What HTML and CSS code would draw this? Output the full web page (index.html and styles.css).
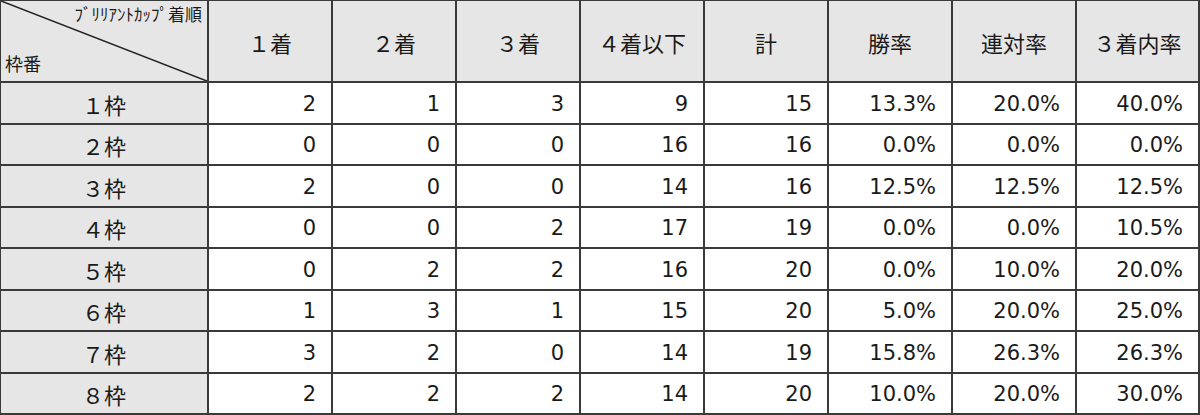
FILE: index.html
```html
<!DOCTYPE html>
<html lang="ja">
<head>
<meta charset="utf-8">
<link rel="stylesheet" href="styles.css">
</head>
<body>
<div class="table">
  <div class="cell head corner">
    <svg class="diag" viewBox="0 0 100 100" preserveAspectRatio="none"><line x1="0" y1="0" x2="100" y2="100" vector-effect="non-scaling-stroke"/></svg>
    <span class="corner-top">ﾌﾞﾘﾘｱﾝﾄｶｯﾌﾟ着順</span>
    <span class="corner-bottom">枠番</span>
  </div>
  <div class="cell head">１着</div>
  <div class="cell head">２着</div>
  <div class="cell head">３着</div>
  <div class="cell head">４着以下</div>
  <div class="cell head">計</div>
  <div class="cell head">勝率</div>
  <div class="cell head">連対率</div>
  <div class="cell head">３着内率</div>

  <div class="cell label">１枠</div><div class="cell num">2</div><div class="cell num">1</div><div class="cell num">3</div><div class="cell num">9</div><div class="cell num">15</div><div class="cell num">13.3%</div><div class="cell num">20.0%</div><div class="cell num">40.0%</div>
  <div class="cell label">２枠</div><div class="cell num">0</div><div class="cell num">0</div><div class="cell num">0</div><div class="cell num">16</div><div class="cell num">16</div><div class="cell num">0.0%</div><div class="cell num">0.0%</div><div class="cell num">0.0%</div>
  <div class="cell label">３枠</div><div class="cell num">2</div><div class="cell num">0</div><div class="cell num">0</div><div class="cell num">14</div><div class="cell num">16</div><div class="cell num">12.5%</div><div class="cell num">12.5%</div><div class="cell num">12.5%</div>
  <div class="cell label">４枠</div><div class="cell num">0</div><div class="cell num">0</div><div class="cell num">2</div><div class="cell num">17</div><div class="cell num">19</div><div class="cell num">0.0%</div><div class="cell num">0.0%</div><div class="cell num">10.5%</div>
  <div class="cell label">５枠</div><div class="cell num">0</div><div class="cell num">2</div><div class="cell num">2</div><div class="cell num">16</div><div class="cell num">20</div><div class="cell num">0.0%</div><div class="cell num">10.0%</div><div class="cell num">20.0%</div>
  <div class="cell label">６枠</div><div class="cell num">1</div><div class="cell num">3</div><div class="cell num">1</div><div class="cell num">15</div><div class="cell num">20</div><div class="cell num">5.0%</div><div class="cell num">20.0%</div><div class="cell num">25.0%</div>
  <div class="cell label">７枠</div><div class="cell num">3</div><div class="cell num">2</div><div class="cell num">0</div><div class="cell num">14</div><div class="cell num">19</div><div class="cell num">15.8%</div><div class="cell num">26.3%</div><div class="cell num">26.3%</div>
  <div class="cell label">８枠</div><div class="cell num">2</div><div class="cell num">2</div><div class="cell num">2</div><div class="cell num">14</div><div class="cell num">20</div><div class="cell num">10.0%</div><div class="cell num">20.0%</div><div class="cell num">30.0%</div>
</div>
</body>
</html>
```

FILE: styles.css
```css
html, body {
  margin: 0;
  padding: 0;
  background: #ffffff;
}

.table {
  box-sizing: border-box;
  width: 1200px;
  height: 415px;
  padding: 1px 2px 2px 1px;
  display: grid;
  grid-template-columns: 206px repeat(7, 122px) 121px;
  grid-template-rows: 80px repeat(8, 1fr);
  gap: 2px;
  background: #3a3a3a;
  font-family: "DejaVu Sans", "Noto Sans CJK JP", sans-serif;
  color: #1a1a1a;
}

.cell {
  display: flex;
  align-items: center;
  font-size: 21px;
  padding-top: 2px;
  box-sizing: border-box;
}

.head {
  background: #e6e6e6;
  justify-content: center;
  font-family: "Noto Sans CJK JP", sans-serif;
  font-size: 22px;
  padding-top: 2px;
}

.label {
  background: #e6e6e6;
  justify-content: center;
  font-family: "Noto Sans CJK JP", sans-serif;
  font-size: 22px;
}

.num {
  background: #ffffff;
  justify-content: flex-end;
  padding-right: 15px;
}

.corner {
  position: relative;
  display: flex;
  flex-direction: column;
  justify-content: space-between;
  align-items: stretch;
  padding: 3px 5px 8px 4px;
}

.diag {
  position: absolute;
  left: 0;
  top: 0;
  width: 100%;
  height: 100%;
}

.diag line {
  stroke: #222222;
  stroke-width: 1.6;
}

.corner-top {
  position: relative;
  align-self: flex-end;
  font-size: 17px;
  line-height: 20px;
}

.corner-bottom {
  position: relative;
  align-self: flex-start;
  font-size: 18px;
  line-height: 20px;
}
```
